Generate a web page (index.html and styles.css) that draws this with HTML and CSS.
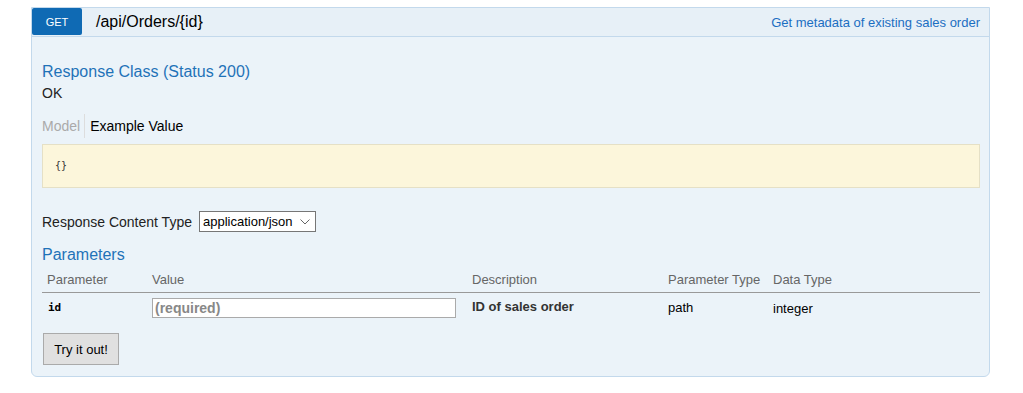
FILE: index.html
```html
<!DOCTYPE html>
<html lang="en">
<head>
    <meta charset="UTF-8">
    <title>GET /api/Orders/{id}</title>
    <link rel="stylesheet" href="styles.css">
</head>
<body>
    <div class="operation">
        <div class="heading">
            <span class="http-method">GET</span>
            <span class="path">/api/Orders/{id}</span>
            <span class="summary">Get metadata of existing sales order</span>
        </div>
        <div class="content">
            <h4 class="section-title">Response Class (Status 200)</h4>
            <div class="status-text">OK</div>

            <ul class="signature-nav">
                <li class="tab muted">Model</li>
                <li class="tab active">Example Value</li>
            </ul>
            <div class="snippet"><pre>{}</pre></div>

            <div class="content-type">
                <label for="respType">Response Content Type</label>
                <span class="select-wrap">
                    <select id="respType" class="type-select">
                        <option>application/json</option>
                    </select>
                    <svg class="chevron" width="10" height="6" viewBox="0 0 10 6">
                        <path d="M0.5 0.5 L5 5 L9.5 0.5" fill="none" stroke="#666" stroke-width="1"/>
                    </svg>
                </span>
            </div>

            <h4 class="section-title params-title">Parameters</h4>
            <table class="params">
                <thead>
                    <tr>
                        <th class="col-name">Parameter</th>
                        <th class="col-value">Value</th>
                        <th class="col-desc">Description</th>
                        <th class="col-ptype">Parameter Type</th>
                        <th class="col-dtype">Data Type</th>
                    </tr>
                </thead>
                <tbody>
                    <tr>
                        <td class="param-name">id</td>
                        <td><input type="text" class="param-input" placeholder="(required)"></td>
                        <td class="param-desc">ID of sales order</td>
                        <td>path</td>
                        <td class="dtype">integer</td>
                    </tr>
                </tbody>
            </table>

            <button class="submit">Try it out!</button>
        </div>
    </div>
</body>
</html>
```

FILE: styles.css
```css
/* General */
body {
    margin: 0;
    padding: 7px 32px 0 31px;
    font-family: 'Liberation Sans', Arial, sans-serif;
    font-size: 14px;
    color: #222;
    background: #fff;
}

.operation {
    width: 957px;
    border: 1px solid #c3d9ec;
    border-radius: 0 0 6px 6px;
    background: #ebf3f9;
}

/* Heading bar */
.heading {
    display: flex;
    align-items: center;
    height: 28px;
    background: #e7f0f7;
    border-bottom: 1px solid #c3d9ec;
}

.http-method {
    width: 50px;
    height: 27px;
    line-height: 29px;
    align-self: flex-start;
    background: #0f6ab4;
    color: #fff;
    font-size: 11px;
    text-align: center;
    border-radius: 2px;
}

.path {
    padding-left: 14px;
    font-size: 16px;
    color: #000;
}

.summary {
    margin-left: auto;
    padding-right: 9px;
    color: #1b6ec2;
    font-size: 13px;
}

/* Body */
.content {
    padding: 18px 9px 11px 10px;
}

.section-title {
    margin: 8px 0 0;
    font-size: 16px;
    font-weight: normal;
    color: #1f72b8;
}

.status-text {
    margin-top: 4px;
    color: #222;
}

.signature-nav {
    display: flex;
    margin: 13px 0 0;
    padding: 0;
    list-style: none;
}

.tab {
    line-height: 24px;
}

.tab.muted {
    color: #aaa;
    padding-right: 4px;
    border-right: 1px solid #ddd;
}

.tab.active {
    color: #000;
    padding-left: 5px;
}

.snippet {
    margin-top: 6px;
    height: 42px;
    background: #fcf6db;
    border: 1px solid #e5e0c6;
}

.snippet pre {
    margin: 0;
    padding: 15px 0 0 12px;
    font-family: 'DejaVu Sans Mono', monospace;
    font-size: 10px;
    color: #333;
}

.content-type {
    display: flex;
    align-items: center;
    margin-top: 23px;
    color: #222;
}

.select-wrap {
    position: relative;
    margin-left: 7px;
    display: inline-flex;
}

.type-select {
    appearance: none;
    height: 21px;
    width: 117px;
    font-family: 'Liberation Sans', Arial, sans-serif;
    font-size: 13px;
    color: #000;
    background: #fff;
    border: 1px solid #767676;
    border-radius: 0;
    padding: 0 0 0 3px;
}

.chevron {
    position: absolute;
    right: 6px;
    top: 8px;
    pointer-events: none;
}

.params-title {
    margin-top: 14px;
}

/* Parameter table */
.params {
    width: 100%;
    margin-top: 8px;
    border-collapse: collapse;
    table-layout: fixed;
}

.params th {
    text-align: left;
    font-weight: normal;
    color: #666;
    font-size: 13px;
    padding: 0 5px 4px;
    border-bottom: 1px solid #999;
    line-height: 16px;
}

.col-name { width: 95px; }
.col-value { width: 310px; }
.col-desc { width: 186px; }
.col-ptype { width: 95px; }

.params td {
    padding: 5px 5px 0;
    vertical-align: top;
    font-size: 13px;
    color: #000;
    line-height: 20px;
}

.params td.param-name {
    font-family: 'DejaVu Sans Mono', monospace;
    font-weight: bold;
    font-size: 11px;
    padding-left: 6px;
}

.params td.param-desc {
    font-weight: bold;
    font-size: 13px;
    color: #333;
    line-height: 18px;
}

.params td.dtype {
    line-height: 22px;
}

.param-input {
    box-sizing: border-box;
    width: 304px;
    height: 20px;
    margin: 0;
    padding: 0 2px;
    border: 1px solid #aaa;
    font-family: 'Liberation Sans', Arial, sans-serif;
    font-size: 14px;
    font-weight: bold;
}

.param-input::placeholder {
    color: #888;
}

.submit {
    margin: 13px 0 0 1px;
    width: 76px;
    height: 32px;
    background: #e0e0e0;
    border: 1px solid #aaa;
    font-family: 'Liberation Sans', Arial, sans-serif;
    font-size: 13px;
    color: #000;
    cursor: pointer;
}
```
